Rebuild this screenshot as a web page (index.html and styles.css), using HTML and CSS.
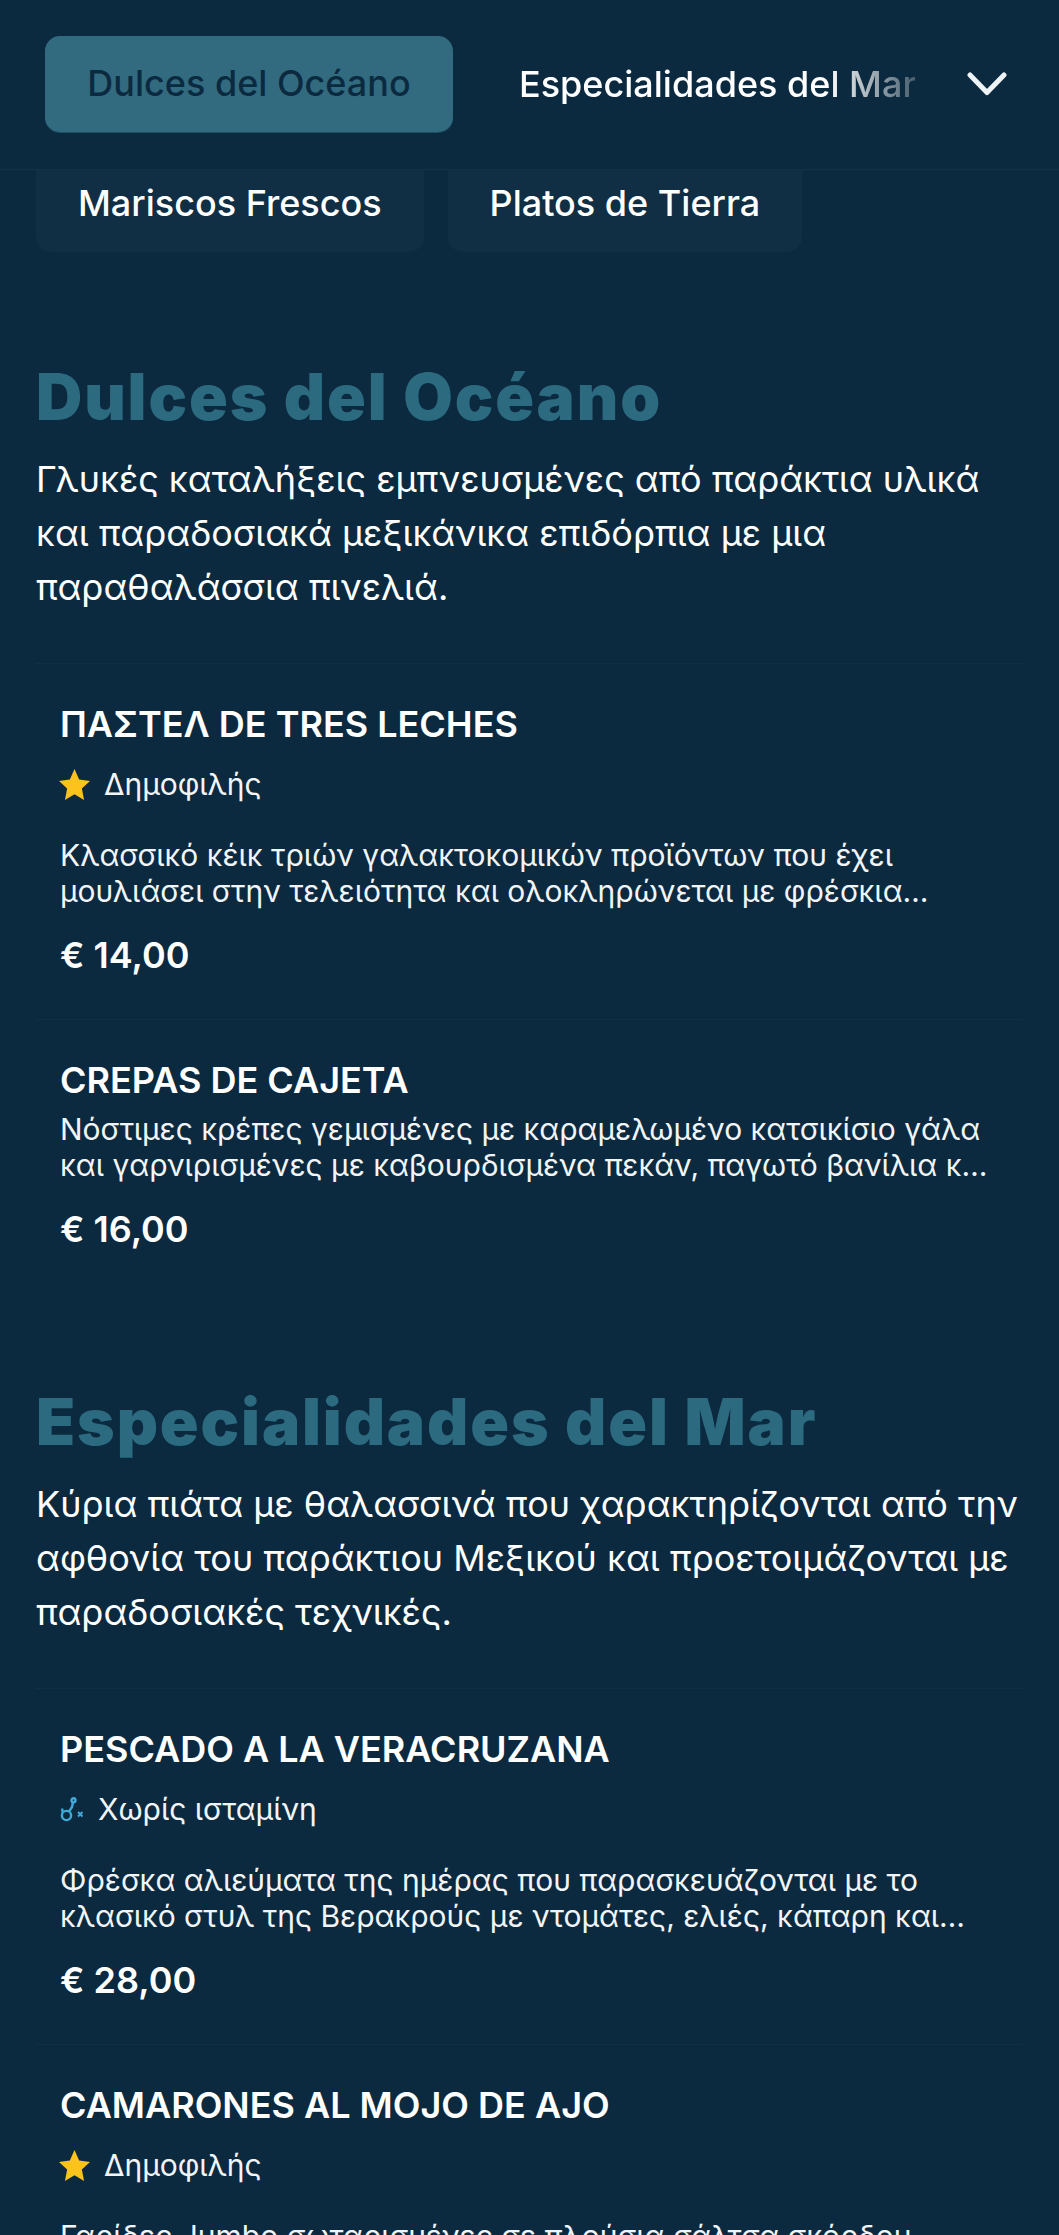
FILE: index.html
```html
<!DOCTYPE html>
<html lang="el">
<head>
<meta charset="utf-8">
<title>Menu</title>
<link rel="stylesheet" href="styles.css">
</head>
<body>
<header class="topbar">
  <nav class="tabs-main">
    <a class="tab active">Dulces del Océano</a>
    <div class="tab-fade"><a class="tab">Especialidades del Mar</a></div>
  </nav>
  <svg class="chevron" viewBox="0 0 40 24" width="40" height="24" aria-hidden="true"><path d="M3 3 L20 20.5 L37 3" fill="none" stroke="#eef3f6" stroke-width="5" stroke-linecap="round" stroke-linejoin="round"/></svg>
</header>
<div class="tabs-extra">
  <a class="chip">Mariscos Frescos</a>
  <a class="chip">Platos de Tierra</a>
</div>
<main>
  <section class="section first">
    <h2>Dulces del Océano</h2>
    <p class="lead">Γλυκές καταλήξεις εμπνευσμένες από παράκτια υλικά και παραδοσιακά μεξικάνικα επιδόρπια με μια παραθαλάσσια πινελιά.</p>
    <article class="item">
      <h3>ΠΑΣΤΕΛ DE TRES LECHES</h3>
      <div class="badge"><svg class="star" viewBox="0 0 24 24" aria-hidden="true"><path d="M12 0 L15.6 8.2 L24 9.2 L17.7 15 L19.4 24 L12 19.5 L4.6 24 L6.3 15 L0 9.2 L8.4 8.2Z" fill="#fbc31c"/></svg><span>Δημοφιλής</span></div>
      <p class="desc">Κλασσικό κέικ τριών γαλακτοκομικών προϊόντων που έχει μουλιάσει στην τελειότητα και ολοκληρώνεται με φρέσκια σαντιγί και φρούτα εποχής για ένα ξεχωριστό τέλος</p>
      <div class="price">€ 14,00</div>
    </article>
    <article class="item">
      <h3>CREPAS DE CAJETA</h3>
      <p class="desc tight">Νόστιμες κρέπες γεμισμένες με καραμελωμένο κατσικίσιο γάλα και γαρνιρισμένες με καβουρδισμένα πεκάν, παγωτό βανίλια και σιρόπι</p>
      <div class="price">€ 16,00</div>
    </article>
  </section>
  <section class="section">
    <h2>Especialidades del Mar</h2>
    <p class="lead">Κύρια πιάτα με θαλασσινά που χαρακτηρίζονται από την αφθονία του παράκτιου Μεξικού και προετοιμάζονται με παραδοσιακές τεχνικές.</p>
    <article class="item">
      <h3>PESCADO A LA VERACRUZANA</h3>
      <div class="badge"><svg class="mol" viewBox="0 0 24 25" aria-hidden="true"><g fill="none" stroke="#3fa9d8" stroke-width="2.4"><circle cx="6.5" cy="18.5" r="4.6"/><circle cx="13.5" cy="3.2" r="2"/><path d="M13 5.2 L12 10 L9 14.6"/><path d="M2.6 15.5 L2.2 11.5"/><path d="M18 15 l4.5 4.5 M22.5 15 l-4.5 4.5" stroke-width="2"/></g></svg><span>Χωρίς ισταμίνη</span></div>
      <p class="desc">Φρέσκα αλιεύματα της ημέρας που παρασκευάζονται με το κλασικό στυλ της Βερακρούς με ντομάτες, ελιές, κάπαρη και πιπεριές σε αρωματική σάλτσα της θάλασσας</p>
      <div class="price">€ 28,00</div>
    </article>
    <article class="item">
      <h3>CAMARONES AL MOJO DE AJO</h3>
      <div class="badge"><svg class="star" viewBox="0 0 24 24" aria-hidden="true"><path d="M12 0 L15.6 8.2 L24 9.2 L17.7 15 L19.4 24 L12 19.5 L4.6 24 L6.3 15 L0 9.2 L8.4 8.2Z" fill="#fbc31c"/></svg><span>Δημοφιλής</span></div>
      <p class="desc">Γαρίδες Jumbo σωταρισμένες σε πλούσια σάλτσα σκόρδου</p>
    </article>
  </section>
</main>
</body>
</html>
```
FILE: styles.css
```css
* { box-sizing: border-box; }
html, body { margin: 0; padding: 0; }
html { background: #0c2a3f; }
body {
  width: 1059px;
  height: 2235px;
  overflow: hidden;
  background: #0c2a3f;
  color: #fff;
  font-family: Inter, "Noto Sans", sans-serif;
}
.topbar {
  height: 170px;
  display: flex;
  align-items: flex-start;
  justify-content: space-between;
  padding: 36px 52px 0 45px;
  border-bottom: 1px solid #12324a;
  background: #0c2a3f;
}
.tabs-main { display: flex; align-items: center; gap: 66px; }
.tab {
  font-size: 36px;
  font-weight: 500;
  line-height: 94px;
  white-space: nowrap;
  display: block;
}
.tab.active {
  width: 408px;
  height: 96px;
  text-align: center;
  border-radius: 15px;
  background: #326b7f;
  color: #0c2a3f;
  box-shadow: 0 1px 0 #1d5063;
}
.tab-fade {
  width: 396px;
  overflow: hidden;
  color: #fff;
  -webkit-mask-image: linear-gradient(to right, #000 78%, rgba(0,0,0,.25) 100%);
  mask-image: linear-gradient(to right, #000 78%, rgba(0,0,0,.25) 100%);
}
.chevron { margin-top: 36px; flex: none; }
.tabs-extra {
  display: flex;
  gap: 24px;
  padding: 0 36px;
  height: 82px;
}
.chip {
  height: 82px;
  padding: 0 42px;
  font-size: 36px;
  font-weight: 500;
  line-height: 66px;
  background: #102e44;
  border-radius: 0 0 15px 15px;
  white-space: nowrap;
}
.section { padding: 0 36px; margin-top: 90px; }
.section.first { margin-top: 0; padding-top: 106px; }
h2 {
  margin: 0;
  font-size: 64px;
  line-height: 78px;
  font-weight: 900;
  letter-spacing: 1.9px;
  color: #2c6a80;
}
.lead {
  margin: 16px 0 0;
  font-size: 36px;
  line-height: 54px;
}
.item {
  margin-top: 49px;
  padding: 36px 24px 40px;
  border-top: 1px solid #102f46;
}
.item + .item { margin-top: 0; }
h3 {
  margin: 0;
  font-size: 36px;
  line-height: 48px;
  font-weight: 600;
}
.badge {
  display: flex;
  align-items: center;
  gap: 14px;
  margin-top: 15px;
  height: 42px;
  font-size: 30px;
  color: #f2f5f7;
}
.star { width: 31px; height: 31px; flex: none; margin-left: -1px; }
.mol { width: 24px; height: 25px; flex: none; }
.desc {
  margin: 32px 0 0;
  font-size: 30px;
  line-height: 36px;
  display: -webkit-box;
  -webkit-box-orient: vertical;
  -webkit-line-clamp: 2;
  overflow: hidden;
  color: #f2f5f7;
}
.desc.tight { margin-top: 7px; }
.price {
  margin-top: 22px;
  font-size: 36px;
  line-height: 48px;
  font-weight: 600;
}
```
